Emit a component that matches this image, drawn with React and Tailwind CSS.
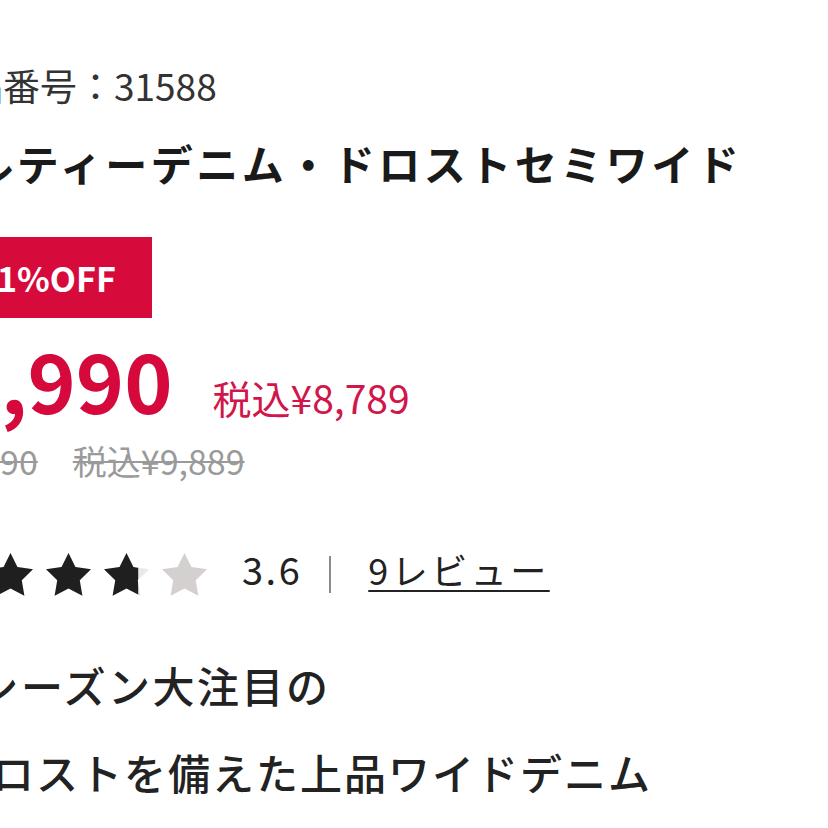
import React from "react";

const FONT = { fontFamily: '"Noto Sans CJK JP", "Noto Sans", sans-serif' };

const STAR_PATH =
  "M12 2l3.09 6.26L22 9.27l-5 4.87 1.18 6.88L12 17.77l-6.18 3.25L7 14.14 2 9.27l6.91-1.01L12 2z";

function Star({ fill = 1 }) {
  const id = `clip-${Math.round(fill * 100)}`;
  return (
    <svg width="45" height="43" viewBox="2 2 20 19.1" className="shrink-0">
      <defs>
        <clipPath id={id}>
          <rect x="2" y="0" width={20 * fill} height="24" />
        </clipPath>
      </defs>
      <path d={STAR_PATH} fill={fill === 0 ? "#d4d0d0" : "#ebe8e8"} />
      {fill > 0 && <path d={STAR_PATH} fill="#1f1f1f" clipPath={`url(#${id})`} />}
    </svg>
  );
}

export default function App() {
  const rating = [1, 1, 1, 0.76, 0];

  return (
    <div className="min-h-screen w-full overflow-hidden bg-white" style={FONT}>
      <div className="flex flex-col">
        <p className="-ml-[71px] mt-[57px] h-[56px] whitespace-nowrap text-[37px] leading-[56px] text-[#333]">
          商品番号：31588
        </p>

        <h1 className="-ml-[164px] mt-[22px] h-[56px] whitespace-nowrap text-[42px] font-bold leading-[56px] tracking-[3.5px] text-[#1a1a1a]">
          ロイヤルティーデニム・ドロストセミワイド
        </h1>

        <div className="-ml-[59px] mt-[46px] flex h-[81px] w-fit items-center bg-[#d70b3b] px-[36px]">
          <span className="whitespace-nowrap text-[34px] font-bold leading-none text-white">
            11%OFF
          </span>
        </div>

        <div className="-ml-[96px] mt-[16px] flex h-[90px] items-baseline whitespace-nowrap">
          <span className="text-[82px] font-bold leading-[90px] text-[#d5093b]">¥7,990</span>
          <span className="ml-[40px] text-[39px] leading-[90px] text-[#d0164a]">税込¥8,789</span>
        </div>

        <div className="-ml-[66px] mt-[15px] flex h-[44px] items-center whitespace-nowrap text-[34px] leading-[44px] text-[#9a9a9a]">
          <span className="line-through decoration-2">¥8,990</span>
          <span className="ml-[35px] line-through decoration-2">税込¥9,889</span>
        </div>

        <div className="-ml-[70px] mt-[67px] flex h-[48px] items-center whitespace-nowrap">
          <div className="flex items-center gap-[13px]">
            {rating.map((f, i) => (
              <Star key={i} fill={f} />
            ))}
          </div>
          <span className="ml-[35px] pb-[10px] text-[38px] leading-[48px] tracking-[2.5px] text-[#222]">
            3.6
          </span>
          <span className="ml-[27px] h-[37px] w-[2px] bg-[#8a8a8a]" />
          <a className="ml-[37px] pb-[10px] text-[36px] leading-[48px] tracking-[3.5px] text-[#222] underline decoration-2 underline-offset-[5px]">
            9レビュー
          </a>
        </div>

        <p className="-ml-[68px] mt-[59px] h-[56px] whitespace-nowrap text-[42px] font-medium leading-[56px] tracking-[2.5px] text-[#222]">
          今シーズン大注目の
        </p>
        <p className="-ml-[52px] mt-[31px] h-[56px] whitespace-nowrap text-[42px] font-medium leading-[56px] tracking-[2px] text-[#222]">
          ドロストを備えた上品ワイドデニム
        </p>
      </div>
    </div>
  );
}
